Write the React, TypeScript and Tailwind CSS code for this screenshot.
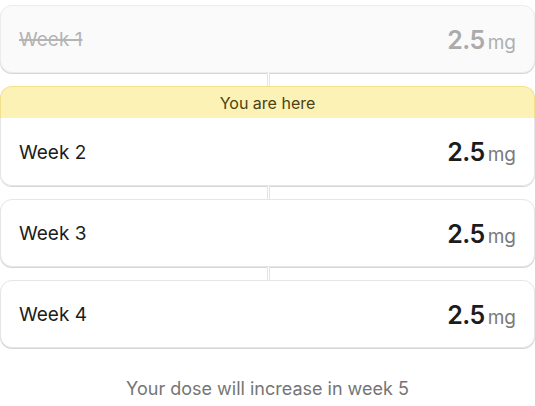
const weeks = [
  { label: "Week 1", dose: "2.5", past: true },
  { label: "Week 2", dose: "2.5", current: true },
  { label: "Week 3", dose: "2.5" },
  { label: "Week 4", dose: "2.5" },
];

type Week = { label: string; dose: string; past?: boolean; current?: boolean };

const Connector = () => (
  <div className="flex h-[13px] justify-center">
    <div className="ml-[1px] w-[3px] border-x border-[#e4e4e4] bg-white" />
  </div>
);

const Row = ({ week, tall }: { week: Week; tall?: boolean }) => (
  <div
    className={
      tall
        ? "flex h-[67px] items-center justify-between px-[18px] pt-[3px]"
        : "flex h-[66px] items-center justify-between px-[18px] pt-[3px]"
    }
  >
    <span
      className={
        week.past
          ? "text-[19px] text-[#b4b4b4] line-through decoration-[1.5px]"
          : "text-[19px] text-[#1c1c1c]"
      }
    >
      {week.label}
    </span>
    <span className="flex items-baseline gap-[3px]">
      <span
        className={
          week.past
            ? "text-[25px] font-semibold tracking-[-0.5px] text-[#ababab]"
            : "text-[25px] font-semibold tracking-[-0.5px] text-[#1c1c1c]"
        }
      >
        {week.dose}
      </span>
      <span className={week.past ? "text-[19px] text-[#b0b0b0]" : "text-[19px] text-[#7a7a7a]"}>mg</span>
    </span>
  </div>
);

const Card = ({ week }: { week: Week }) => {
  if (week.current) {
    return (
      <div className="rounded-xl shadow-[0_1px_0_#d6d6d6]">
        <div className="flex h-[32px] items-center justify-center rounded-t-xl border border-b-0 border-[#f3e08a] bg-[#fcf2b6] pt-[1px] text-[16px] text-[#4a4215]">
          You are here
        </div>
        <div className="rounded-b-xl border border-t-0 border-[#e6e6e6] bg-white">
          <Row week={week} tall />
        </div>
      </div>
    );
  }
  return (
    <div
      className={
        week.past
          ? "rounded-xl border border-[#ececec] bg-[#fafafa] shadow-[0_1px_0_#d6d6d6]"
          : "rounded-xl border border-[#e6e6e6] bg-white shadow-[0_1px_0_#d6d6d6]"
      }
    >
      <Row week={week} />
    </div>
  );
};

export default function App() {
  return (
    <div
      className="flex h-[406px] w-[535px] flex-col bg-white pt-[5px]"
      style={{ fontFamily: "Inter, 'Liberation Sans', sans-serif" }}
    >
      {weeks.map((w, i) => (
        <div key={w.label}>
          {i > 0 && <Connector />}
          <Card week={w} />
        </div>
      ))}
      <p className="mt-[27px] text-center text-[18px] text-[#757575]">Your dose will increase in week 5</p>
    </div>
  );
}
